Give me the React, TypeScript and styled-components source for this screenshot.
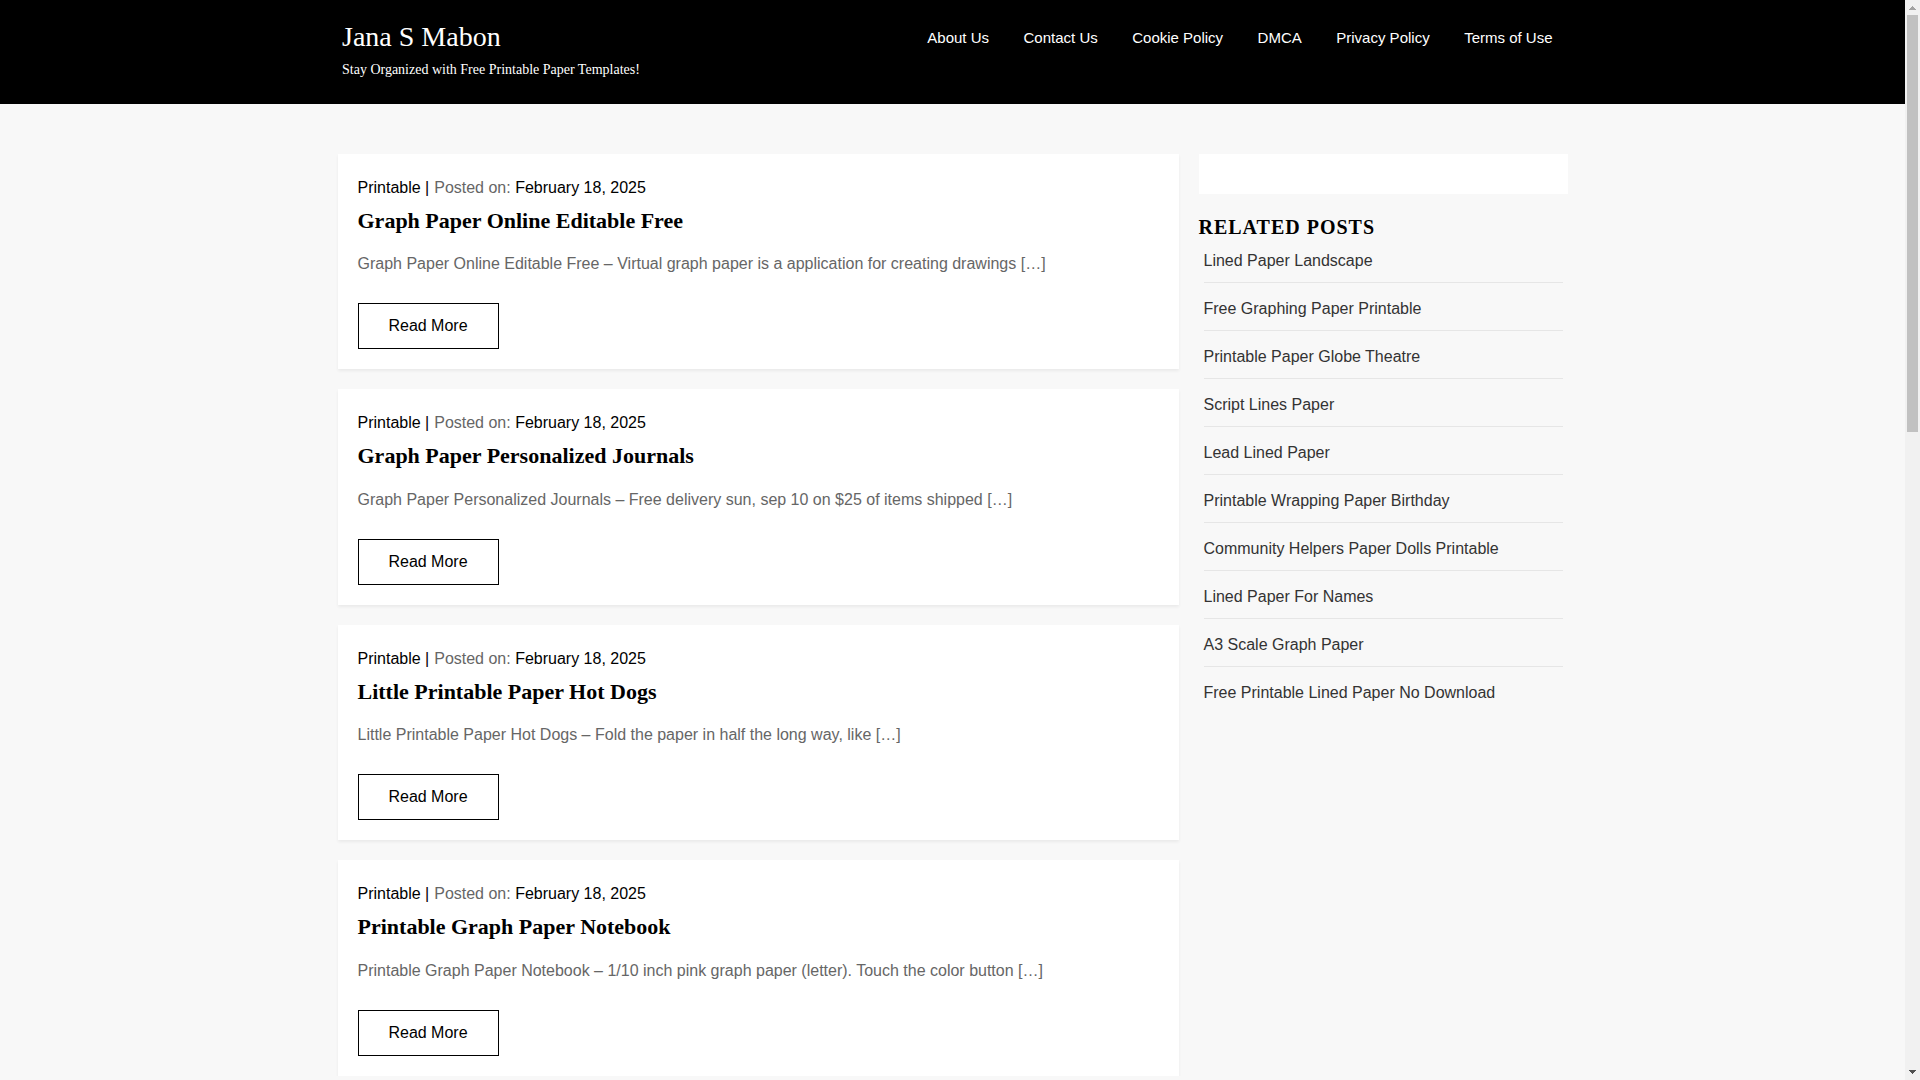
import React from 'react';
import styled, { createGlobalStyle } from 'styled-components';

const GlobalStyle = createGlobalStyle`
    html, body {
        margin: 0;
        background: #f8f8f8;
    }

    body {
        color: #000;
        font-family: "Liberation Sans", Arial, sans-serif;
        font-size: 16px;
    }
`;

const navLinks = ['About Us', 'Contact Us', 'Cookie Policy', 'DMCA', 'Privacy Policy', 'Terms of Use'];

const posts = [
    {
        title: 'Graph Paper Online Editable Free',
        excerpt: 'Graph Paper Online Editable Free – Virtual graph paper is a application for creating drawings […]',
    },
    {
        title: 'Graph Paper Personalized Journals',
        excerpt: 'Graph Paper Personalized Journals – Free delivery sun, sep 10 on $25 of items shipped […]',
    },
    {
        title: 'Little Printable Paper Hot Dogs',
        excerpt: 'Little Printable Paper Hot Dogs – Fold the paper in half the long way, like […]',
    },
    {
        title: 'Printable Graph Paper Notebook',
        excerpt: 'Printable Graph Paper Notebook – 1/10 inch pink graph paper (letter). Touch the color button […]',
    },
];

const related = [
    'Lined Paper Landscape',
    'Free Graphing Paper Printable',
    'Printable Paper Globe Theatre',
    'Script Lines Paper',
    'Lead Lined Paper',
    'Printable Wrapping Paper Birthday',
    'Community Helpers Paper Dolls Printable',
    'Lined Paper For Names',
    'A3 Scale Graph Paper',
    'Free Printable Lined Paper No Download',
];

export default function App() {
    return (
        <>
            <GlobalStyle />
            <Header>
                <HeaderInner>
                    <Branding>
                        <SiteTitle>Jana S Mabon</SiteTitle>
                        <Tagline>Stay Organized with Free Printable Paper Templates!</Tagline>
                    </Branding>
                    <Nav>
                        {navLinks.map((link) => (
                            <NavLink key={link} href="#">{link}</NavLink>
                        ))}
                    </Nav>
                </HeaderInner>
            </Header>
            <Page>
                <Posts>
                    {posts.map((post) => (
                        <Card key={post.title}>
                            <Meta>
                                Printable | <Muted>Posted on:</Muted> February 18, 2025
                            </Meta>
                            <PostTitle>{post.title}</PostTitle>
                            <Excerpt>{post.excerpt}</Excerpt>
                            <ReadMore href="#">Read More</ReadMore>
                        </Card>
                    ))}
                </Posts>
                <Sidebar>
                    <EmptyWidget />
                    <WidgetTitle>RELATED POSTS</WidgetTitle>
                    <RelatedList>
                        {related.map((item) => (
                            <RelatedItem key={item}>{item}</RelatedItem>
                        ))}
                    </RelatedList>
                </Sidebar>
            </Page>
            <Scrollbar aria-hidden="true">
                <ScrollArrow viewBox="0 0 15 15" shapeRendering="crispEdges">
                    <polygon points="4,10 11,10 7.5,6" fill="#a3a3a3" />
                </ScrollArrow>
                <ScrollTrack>
                    <ScrollThumb />
                </ScrollTrack>
                <ScrollArrow viewBox="0 0 15 15" shapeRendering="crispEdges">
                    <polygon points="4,5 11,5 7.5,9" fill="#505050" />
                </ScrollArrow>
            </Scrollbar>
        </>
    );
}

const Header = styled.header`
    height: 104px;
    background: #000;
    color: #fff;
`;

const HeaderInner = styled.div`
    width: 1210.5px;
    margin-left: 342px;
    display: flex;
    justify-content: space-between;
    align-items: flex-start;
`;

const Branding = styled.div`
    padding-top: 18px;
`;

const SiteTitle = styled.div`
    font-family: "Liberation Serif", "Times New Roman", serif;
    font-size: 28px;
    line-height: 37px;
`;

const Tagline = styled.div`
    font-family: "Liberation Serif", "Times New Roman", serif;
    font-size: 14px;
    line-height: 20px;
    margin-top: 5px;
`;

const Nav = styled.nav`
    display: flex;
    gap: 34.5px;
    padding-top: 28px;
`;

const NavLink = styled.a`
    color: #fff;
    font-size: 15px;
    line-height: 20px;
    text-decoration: none;
`;

const Page = styled.main`
    width: 1230px;
    margin-left: 337.5px;
    padding-top: 50px;
    display: flex;
    align-items: flex-start;
    gap: 20px;
`;

const Posts = styled.div`
    width: 841px;
    display: flex;
    flex-direction: column;
    gap: 20px;
`;

const Card = styled.article`
    background: #fff;
    box-shadow: 0 2px 3px rgba(0, 0, 0, 0.06);
    padding: 21px 20px 20px;
`;

const Meta = styled.div`
    line-height: 26px;
`;

const Muted = styled.span`
    color: #666;
    margin-left: 0.5px;
`;

const PostTitle = styled.h2`
    font-family: "Liberation Serif", "Times New Roman", serif;
    font-size: 22px;
    font-weight: 700;
    line-height: 30px;
    margin: 5px 0 0;
`;

const Excerpt = styled.p`
    color: #666;
    line-height: 26px;
    margin: 15.4px 0 0;
`;

const ReadMore = styled.a`
    display: block;
    box-sizing: border-box;
    width: 141px;
    height: 46px;
    margin-top: 26px;
    border: 1px solid #000;
    color: #000;
    line-height: 44px;
    text-align: center;
    text-decoration: none;
`;

const Sidebar = styled.aside`
    width: 369px;
`;

const EmptyWidget = styled.div`
    height: 40px;
    background: #fff;
`;

const WidgetTitle = styled.h3`
    font-family: "Liberation Serif", "Times New Roman", serif;
    font-size: 20px;
    font-weight: 700;
    letter-spacing: 1px;
    line-height: 28px;
    margin: 19px 0 7px;
`;

const RelatedList = styled.ul`
    list-style: none;
    margin: 0;
    padding: 0 5px;
`;

const RelatedItem = styled.li`
    color: #333;
    line-height: 26px;
    padding-bottom: 8px;
    margin-bottom: 13px;
    border-bottom: 1px solid #e6e6e6;

    &:last-child {
        border-bottom: none;
    }
`;

const Scrollbar = styled.div`
    position: fixed;
    top: 0;
    right: 0;
    bottom: 0;
    width: 15px;
    display: flex;
    flex-direction: column;
    background: #f1f1f1;
`;

const ScrollArrow = styled.svg`
    display: block;
    flex: none;
    width: 15px;
    height: 15px;
`;

const ScrollTrack = styled.div`
    flex: 1;
    padding: 0 2px;
`;

const ScrollThumb = styled.div`
    height: 417px;
    background: #c1c1c1;
`;
